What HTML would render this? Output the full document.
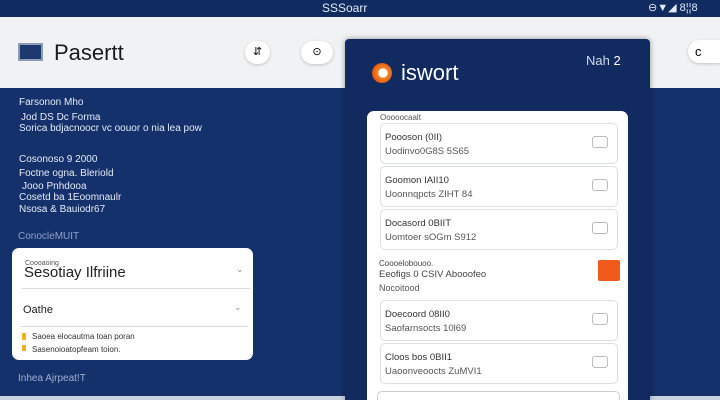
<!DOCTYPE html>
<html><head><style>
*{margin:0;padding:0;box-sizing:border-box}
html{width:720px;height:400px;overflow:hidden}
body{width:720px;height:400px;overflow:hidden;background:#14316b;font-family:"Liberation Sans",sans-serif;position:relative}
.a{position:absolute}
.t{color:#e6ebf5;font-size:10px;white-space:nowrap}
.row{position:absolute;left:380px;width:238px;height:41px;background:#fff;border:1px solid #dcdfe5;border-radius:5px}
.row b{position:absolute;left:4px;top:8px;font-size:9.5px;color:#333;font-weight:normal}
.row i{position:absolute;left:4px;top:22px;font-size:9.5px;color:#555;font-style:normal}
.row s{position:absolute;right:9px;top:12px;width:16px;height:12px;border:1.5px solid #bbb;border-radius:3px;text-decoration:none}
</style></head><body>
<div class="a" style="left:0;top:0;width:720px;height:17px;background:#0f2b60"></div>
<div class="a t" style="left:322px;top:1px;font-size:12px">SSSoarr</div>
<div class="a t" style="left:648px;top:1px;font-size:11px">⊖▼◢ 8¦¦8</div>
<div class="a" style="left:0;top:17px;width:720px;height:71px;background:#f1f2f4"></div>
<div class="a" style="left:18px;top:43px;width:25px;height:18px;background:#1d3a6f;border:2px solid #8b9bb8"></div>
<div class="a" style="left:54px;top:40px;font-size:22px;color:#1a1a1a">Pasertt</div>
<div class="a" style="left:245px;top:41px;width:25px;height:23px;border-radius:12px;background:#fff;box-shadow:0 1px 3px #0003;text-align:center;font-size:11px;line-height:23px">⇵</div>
<div class="a" style="left:301px;top:41px;width:32px;height:23px;border-radius:12px;background:#fff;box-shadow:0 1px 3px #0003;text-align:center;font-size:11px;line-height:23px">⊙</div>
<div class="a" style="left:688px;top:40px;width:32px;height:23px;border-radius:12px 0 0 12px;background:#fff;box-shadow:0 1px 3px #0003;padding-left:7px;font-size:13px;line-height:23px">c</div>
<div class="a t" style="left:19px;top:97px">Farsonon Mho</div>
<div class="a t" style="left:21px;top:112px">Jod DS Dc Forma</div>
<div class="a t" style="left:19px;top:123px">Sorica bdjacnoocr vc oouor o nia lea pow</div>
<div class="a t" style="left:19px;top:154px">Cosonoso 9 2000</div>
<div class="a t" style="left:19px;top:168px">Foctne ogna. Bleriold</div>
<div class="a t" style="left:22px;top:181px">Jooo Pnhdooa</div>
<div class="a t" style="left:19px;top:192px">Cosetd ba 1Eoomnaulr</div>
<div class="a t" style="left:19px;top:204px">Nsosa &amp; Bauiodr67</div>
<div class="a t" style="left:18px;top:231px;color:#8fa2c8">ConocleMUIT</div>
<div class="a" style="left:12px;top:248px;width:241px;height:112px;background:#fff;border-radius:7px"></div>
<div class="a" style="left:25px;top:260px;font-size:7px;color:#555">Coooaoing</div>
<div class="a" style="left:24px;top:264px;font-size:15px;color:#222">Sesotiay Ilfriine</div>
<div class="a" style="left:236px;top:264px;font-size:9px;color:#888">⌄</div>
<div class="a" style="left:22px;top:288px;width:228px;height:1px;background:#ddd"></div>
<div class="a" style="left:23px;top:304px;font-size:11px;color:#222">Oathe</div>
<div class="a" style="left:234px;top:302px;font-size:9px;color:#888">⌄</div>
<div class="a" style="left:20px;top:326px;width:228px;height:1px;background:#ddd"></div>
<div class="a" style="left:22px;top:333px;width:4px;height:7px;background:#f0b020"></div>
<div class="a" style="left:32px;top:332px;font-size:8px;color:#333">Saoea elocautma toan poran</div>
<div class="a" style="left:22px;top:345px;width:4px;height:6px;background:#f0b020"></div>
<div class="a" style="left:32px;top:345px;font-size:8px;color:#333">Sasenoioatopfeam toion.</div>
<div class="a t" style="left:18px;top:373px;color:#9fb0d0">Inhea Ajrpeat!T</div>
<div class="a" style="left:0;top:396px;width:720px;height:4px;background:#c9d2e0"></div>
<div class="a" style="left:345px;top:39px;width:305px;height:361px;background:#112a5f;border-radius:4px 4px 0 0;box-shadow:0 0 6px #0006"></div>
<div class="a" style="left:372px;top:63px;width:20px;height:20px;border-radius:50%;background:radial-gradient(circle at 55% 50%,#fff 30%,#f08a2a 32%,#e35a10 70%)"></div>
<div class="a" style="left:401px;top:60px;font-size:22px;color:#fff">iswort</div>
<div class="a" style="left:586px;top:53px;font-size:13px;color:#cfd8ea">Nah <span style="color:#fff">2</span></div>
<div class="a" style="left:367px;top:111px;width:261px;height:289px;background:#fff;border-radius:7px 7px 0 0"></div>
<div class="a" style="left:380px;top:113px;font-size:8px;color:#555">Ooooocaalt</div>
<div class="row" style="top:123px"><b>Poooson (0II)</b><i>Uodinvo0G8S 5S65</i><s></s></div>
<div class="row" style="top:166px"><b>Goomon IAII10</b><i>Uoonnqpcts ZIHT 84</i><s></s></div>
<div class="row" style="top:209px"><b>Docasord 0BIIT</b><i>Uomtoer sOGm S912</i><s></s></div>
<div class="a" style="left:379px;top:259px;font-size:8px;color:#444">Coooelobouoo.</div>
<div class="a" style="left:379px;top:269px;font-size:9.5px;color:#444">Eeofigs 0 CSIV Abooofeo</div>
<div class="a" style="left:379px;top:283px;font-size:9px;color:#555">Nocoitood</div>
<div class="a" style="left:598px;top:260px;width:22px;height:21px;background:#f05a1a;border-radius:2px"></div>
<div class="row" style="top:300px"><b>Doecoord 08II0</b><i>Saofarnsocts 10l69</i><s></s></div>
<div class="row" style="top:343px"><b>Cloos bos 0BII1</b><i>Uaoonveoocts ZuMVI1</i><s></s></div>
<div class="a" style="left:377px;top:391px;width:243px;height:9px;background:#fff;border:1px solid #ccc;border-bottom:none;border-radius:5px 5px 0 0"></div>
</body></html>
